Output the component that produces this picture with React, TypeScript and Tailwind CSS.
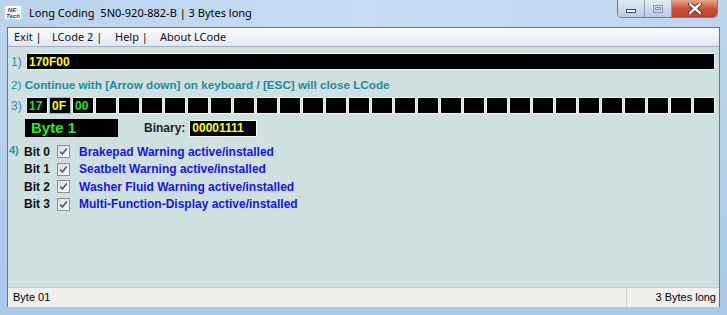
import { useState } from 'react'

const ui = { fontFamily: '"Noto Sans", "Open Sans", sans-serif' }
const arial = { fontFamily: '"Liberation Sans", Arial, sans-serif' }

const bits = [
  'Brakepad Warning active/installed',
  'Seatbelt Warning active/installed',
  'Washer Fluid Warning active/installed',
  'Multi-Function-Display active/installed',
]

function CheckBox({ checked, onToggle }: { checked: boolean; onToggle: () => void }) {
  return (
    <button
      onClick={onToggle}
      className="w-[13px] h-[13px] border border-[#8f8f8f] bg-gradient-to-br from-[#dcdcdc] to-[#fbfbfb] flex items-center justify-center p-0"
    >
      {checked && (
        <svg width="9" height="9" viewBox="0 0 9 9">
          <path d="M1.2 4.6 L3.4 7 L7.8 1.4" fill="none" stroke="#4a5f8a" strokeWidth="1.6" />
        </svg>
      )}
    </button>
  )
}

export default function App() {
  const [checks, setChecks] = useState([true, true, true, true])

  const boxes = Array.from({ length: 30 }, (_, i) => {
    if (i === 0) return { text: '17', color: 'text-[#22e622]', border: 'border-[#f2f4f4]' }
    if (i === 1) return { text: '0F', color: 'text-[#ffff00]', border: 'border-[#9fb8d8]' }
    if (i === 2) return { text: '00', color: 'text-[#22e622]', border: 'border-[#f2f4f4]' }
    return { text: '', color: '', border: 'border-[#f2f4f4]' }
  })

  return (
    <div className="w-[727px] h-[315px] flex flex-col bg-gradient-to-b from-[#bcd6ef] via-[#b2cfec] to-[#a9c9ea] overflow-hidden">
      {/* Title bar */}
      <div className="h-[27px] flex items-start relative bg-gradient-to-r from-[#b9d3ee] via-[#c8ddf3] to-[#bdd6ef]">
        <div className="ml-[4px] mt-[5px] w-[18px] h-[15px] bg-white border border-[#c8d4e8] flex flex-col items-center justify-center leading-[6px]">
          <span className="text-[6px] font-bold italic text-[#1c3a9c]" style={arial}>NE-</span>
          <span className="text-[6px] font-bold italic text-[#1c3a9c]" style={arial}>Tech</span>
        </div>
        <span className="ml-[7px] mt-[5px] text-[11px] leading-[16px] text-black whitespace-pre" style={ui}>
          Long Coding  5N0-920-882-B | 3 Bytes long
        </span>
        {/* caption buttons */}
        <div className="absolute left-[617px] top-0 flex h-[18px] rounded-b-[5px] border border-t-0 border-[#6d7f98] overflow-hidden">
          <div className="w-[27px] h-full bg-gradient-to-b from-[#e3ecf7] to-[#b9cbe2] border-r border-[#8a9bb4] flex items-center justify-center">
            <div className="w-[10px] h-[4px] bg-white border border-[#3c4a5e] mt-[4px]" />
          </div>
          <div className="w-[27px] h-full bg-gradient-to-b from-[#e3ecf7] to-[#b9cbe2] border-r border-[#8a9bb4] flex items-center justify-center">
            <div className="w-[10px] h-[8px] border border-[#8c98a8] flex items-center justify-center">
              <div className="w-[6px] h-[3px] border border-[#8c98a8]" />
            </div>
          </div>
          <div className="w-[45px] h-full bg-gradient-to-b from-[#e8a393] via-[#c9523a] to-[#c2432b] flex items-center justify-center">
            <svg width="14" height="11" viewBox="0 0 14 11">
              <path d="M2 1 L12 10 M12 1 L2 10" stroke="#3d1a14" strokeWidth="4" strokeLinecap="round" />
              <path d="M2 1 L12 10 M12 1 L2 10" stroke="#ffffff" strokeWidth="2.4" strokeLinecap="round" />
            </svg>
          </div>
        </div>
      </div>

      {/* Client area */}
      <div className="flex-1 mx-[7px] flex flex-col border border-[#5d7896] border-b-0 bg-[#cfe0e1]">
        {/* Menu bar */}
        <div
          className="h-[19px] flex items-center pl-[6px] text-[11px] text-[#111] bg-gradient-to-b from-[#fbfbfd] to-[#e4e7f3] border-b border-[#a3adc4] whitespace-pre"
          style={ui}
        >
          <span className="w-[38px]">Exit |</span>
          <span className="w-[63px]">LCode 2 |</span>
          <span className="w-[45px]">Help |</span>
          <span>About LCode</span>
        </div>

        {/* Content */}
        <div className="flex-1 flex flex-col pt-[6px] pl-[3px] pr-[4px] font-bold text-[12px]" style={arial}>
          <div className="flex items-center h-[17px]">
            <span className="w-[15px] text-[#2b93a3] text-[12px] font-normal">1)</span>
            <div className="flex-1 h-[17px] bg-black border border-[#eef2f2] flex items-center pl-[2px] text-[#ffff00]">
              170F00
            </div>
          </div>

          <div className="mt-[8px] h-[14px] flex items-center text-[#1f8c9c] text-[11.7px] whitespace-pre">
            <span className="font-normal">2) </span>
            <span>Continue with [Arrow down] on keyboard / [ESC] will close LCode</span>
          </div>

          <div className="mt-[5px] flex items-center h-[17px]">
            <span className="w-[15px] text-[#2b93a3] font-normal">3)</span>
            <div className="flex gap-px">
              {boxes.map((b, i) => (
                <div
                  key={i}
                  className={`w-[22px] h-[17px] bg-black border ${b.border} ${b.color} flex items-center pl-[2px]`}
                >
                  {b.text}
                </div>
              ))}
            </div>
          </div>

          <div className="mt-[5px] flex items-center h-[18px]">
            <div className="ml-[14px] w-[93px] h-[18px] bg-black text-[#22ee22] text-[15px] flex items-center pl-[6px]">
              Byte 1
            </div>
            <span className="ml-[26px] text-[#1e2233]">Binary:</span>
            <div className="ml-[4px] w-[68px] h-[17px] bg-black border border-[#f4f6f6] text-[#ffff00] flex items-center pl-[2px]">
              00001111
            </div>
          </div>

          <div className="mt-[6px] flex -ml-[2px]">
            <span className="w-[15px] text-[#2b93a3] text-[11px] leading-[12px] mt-[1px]">4)</span>
            <div className="flex flex-col">
              {bits.map((label, i) => (
                <div key={i} className="h-[17.5px] flex items-center">
                  <span className="w-[33px] text-[#111]">Bit {i}</span>
                  <CheckBox
                    checked={checks[i]}
                    onToggle={() => setChecks(checks.map((c, j) => (j === i ? !c : c)))}
                  />
                  <span className="ml-[9px] text-[#1414ee]">{label}</span>
                </div>
              ))}
            </div>
          </div>
        </div>

        {/* Status bar */}
        <div className="h-[20px] flex bg-[#f0efec] border-t border-[#c9c9c9] text-[11px] text-black" style={arial}>
          <div className="flex-1 flex items-center pl-[5px]">Byte 01</div>
          <div className="w-[93px] flex items-center justify-end pr-[3px] border-l border-[#d6d4d0]">3 Bytes long</div>
        </div>
      </div>
      <div className="h-[8px]" />
    </div>
  )
}
